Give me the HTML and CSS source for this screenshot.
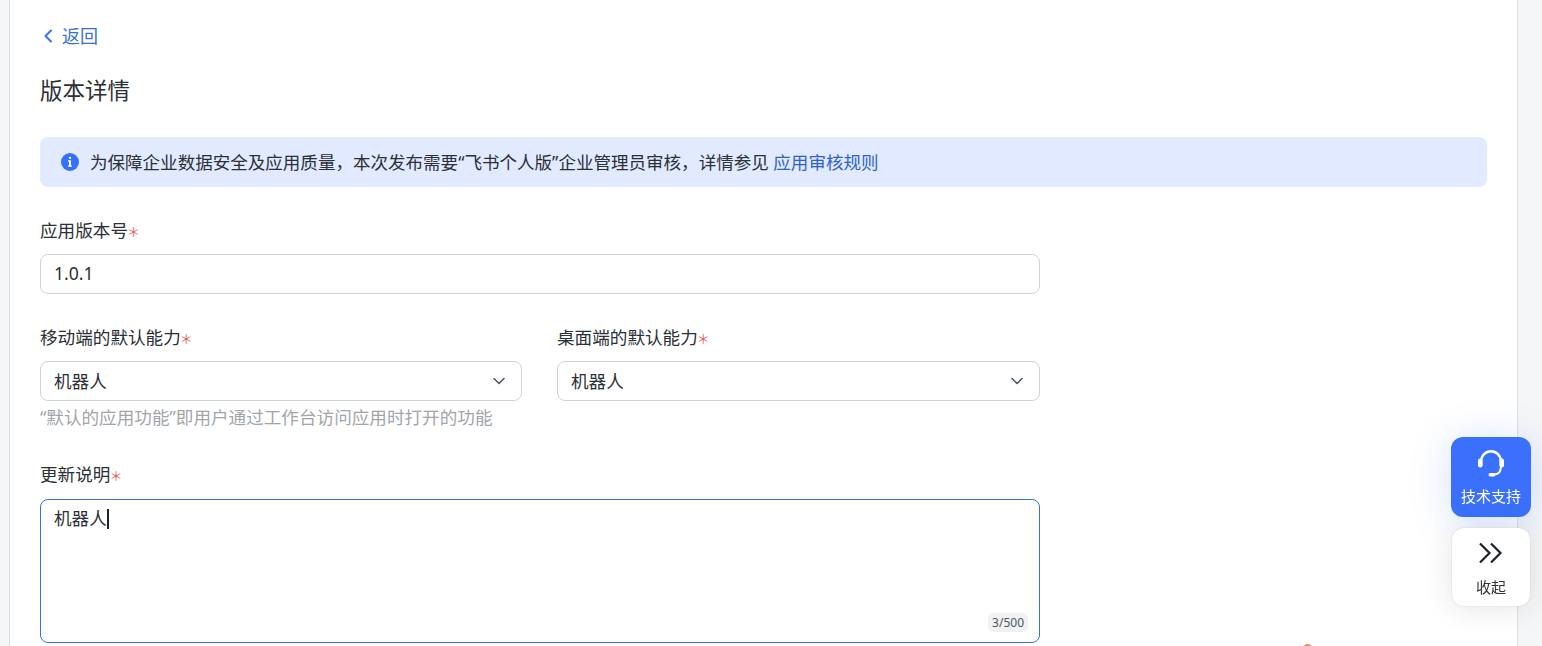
FILE: index.html
```html
<!DOCTYPE html>
<html lang="zh-CN">
<head>
<meta charset="utf-8">
<title>版本详情</title>
<link rel="stylesheet" href="styles.css">
</head>
<body>
<div class="page">
  <main class="card">
    <a class="back" href="#">
      <svg class="back-icon" width="10" height="14" viewBox="0 0 10 14"><path d="M8 1.500 2.500 7 8 12.500" fill="none" stroke="currentColor" stroke-width="2" stroke-linecap="round" stroke-linejoin="round"/></svg>
      <span>返回</span>
    </a>
    <h1 class="title">版本详情</h1>
    <div class="alert">
      <svg class="alert-icon" width="18" height="18" viewBox="0 0 18 18"><circle cx="9" cy="9" r="9" fill="#3370ff"/><rect x="7.900" y="3.700" width="2.200" height="2.200" rx="1" fill="#fff"/><path d="M7 7.300h3v5.200h1v1.300H7v-1.300h1V8.600H7z" fill="#fff"/></svg>
      <span>为保障企业数据安全及应用质量，本次发布需要“飞书个人版”企业管理员审核，详情参见 <a class="link" href="#">应用审核规则</a></span>
    </div>
    <form class="form">
      <div class="field field-version">
        <div class="label">应用版本号<i class="req">＊</i></div>
        <div class="control">1.0.1</div>
      </div>
      <div class="row">
        <div class="field">
          <div class="label">移动端的默认能力<i class="req">＊</i></div>
          <div class="control select">机器人
            <svg class="chev" width="14" height="14" viewBox="0 0 14 14"><path d="M2 4.500 7 9.500 12 4.500" fill="none" stroke="#4e5969" stroke-width="1.600" stroke-linecap="round" stroke-linejoin="round"/></svg>
          </div>
        </div>
        <div class="field">
          <div class="label">桌面端的默认能力<i class="req">＊</i></div>
          <div class="control select">机器人
            <svg class="chev" width="14" height="14" viewBox="0 0 14 14"><path d="M2 4.500 7 9.500 12 4.500" fill="none" stroke="#4e5969" stroke-width="1.600" stroke-linecap="round" stroke-linejoin="round"/></svg>
          </div>
        </div>
      </div>
      <p class="hint">“默认的应用功能”即用户通过工作台访问应用时打开的功能</p>
      <div class="field">
        <div class="label">更新说明<i class="req">＊</i></div>
        <div class="textarea"><span class="typed">机器人</span><span class="caret"></span><span class="count">3/500</span></div>
      </div>
    </form>
  </main>
  <aside class="side"></aside>
</div>
<div class="peek"></div>
<div class="float">
  <div class="fbtn support">
    <svg width="34" height="34" viewBox="0 0 34 34"><path d="M7.200 20V15a9.800 9.800 0 0 1 19.600 0V20" fill="none" stroke="#fff" stroke-width="2.400"/><rect x="4" y="12.500" width="4.500" height="9" rx="2.200" fill="#fff"/><rect x="25.500" y="12.500" width="4.500" height="9" rx="2.200" fill="#fff"/><path d="M26.800 21c0 5-3 7.500-7 7.500" fill="none" stroke="#fff" stroke-width="2"/><rect x="14.500" y="27" width="7" height="3.500" rx="1.700" fill="#fff"/></svg>
    <span>技术支持</span>
  </div>
  <div class="fbtn collapse">
    <svg width="26" height="22" viewBox="0 0 26 22"><path d="M2 1.500 11.500 11 2 20.500M13 1.500 22.500 11 13 20.500" fill="none" stroke="#1f2329" stroke-width="2.200"/></svg>
    <span>收起</span>
  </div>
</div>
```
FILE: styles.css
```css
* { box-sizing: border-box; }
html, body { margin: 0; height: 646px; overflow: hidden; background: #f5f6f7; }
body { font-family: "Noto Sans", "Noto Sans CJK SC", sans-serif; color: #2b2f36; font-size: 17.6px; }
.page { display: flex; height: 646px; padding-left: 9px; }
.card { width: 1509px; height: 646px; padding: 0 30px; background: #fff; border-left: 1px solid #dee0e3; border-right: 1px solid #dee0e3; overflow: hidden; }
.side { flex: 1; }
.back { display: flex; align-items: center; gap: 9px; height: 24px; margin-top: 23px; padding-left: 3px; color: #3a6fd8; font-size: 18px; text-decoration: none; }
.back-icon { color: #3370ff; margin-top: 2px; }
.title { margin: 28px 0 0; height: 32px; font-size: 22.500px; line-height: 32px; font-weight: 400; }
.alert { display: flex; align-items: center; gap: 11px; height: 50px; margin-top: 30px; padding: 0 0 0 21px; border-radius: 8px; background: #e1eaff; font-size: 17.550px; white-space: nowrap; }
.alert span { position: relative; top: -1px; }
.alert-icon { flex: none; }
.link { color: #2f62c9; text-decoration: none; }
.form { width: 1000px; }
.label { height: 26px; line-height: 26px; white-space: nowrap; }
.req { color: #e5635b; font-style: normal; font-size: 13px; line-height: 26px; margin-left: -1px; }
.field-version { margin-top: 30px; }
.control { display: flex; align-items: center; height: 40px; margin-top: 11px; padding: 0 14px 2px 13px; border: 1px solid #d0d3d6; border-radius: 8px; background: #fff; }
.row { display: grid; grid-template-columns: 482px 483px; column-gap: 35px; margin-top: 30px; }
.select { justify-content: space-between; }
.chev { margin-right: 1px; margin-top: 1px; }
.hint { margin: 3px 0 0; height: 26px; line-height: 26px; color: #a2a6ab; white-space: nowrap; }
.hint + .field { margin-top: 31px; }
.textarea { position: relative; height: 144px; margin-top: 12px; padding: 4px 13px; border: 1px solid #3a6fd8; border-radius: 8px; line-height: 28px; }
.caret { display: inline-block; width: 2px; height: 20px; background: #1f2329; vertical-align: -4px; }
.count { position: absolute; right: 11px; bottom: 10px; height: 19px; padding: 0 4px; border-radius: 5px; background: #f0f1f2; color: #51565d; font-size: 12px; line-height: 19px; }
.peek { position: fixed; left: 1303px; top: 644px; width: 9px; height: 9px; border-radius: 50%; background: #e8926a; }
.float { position: fixed; left: 1451px; top: 437px; display: flex; flex-direction: column; align-items: center; gap: 11px; width: 80px; }
.fbtn { display: flex; flex-direction: column; align-items: center; font-size: 15px; }
.support { width: 80px; height: 80px; padding-top: 9px; gap: 5px; border-radius: 12px; background: #3a70fb; color: #fff; box-shadow: 0 4px 40px rgba(51, 112, 255, .22); }
.collapse { width: 78px; height: 78px; padding-top: 14px; gap: 12px; border-radius: 12px; background: #fff; color: #333; box-shadow: 0 0 2px rgba(31, 35, 41, .14), 0 2px 30px rgba(31, 35, 41, .12); }
```
